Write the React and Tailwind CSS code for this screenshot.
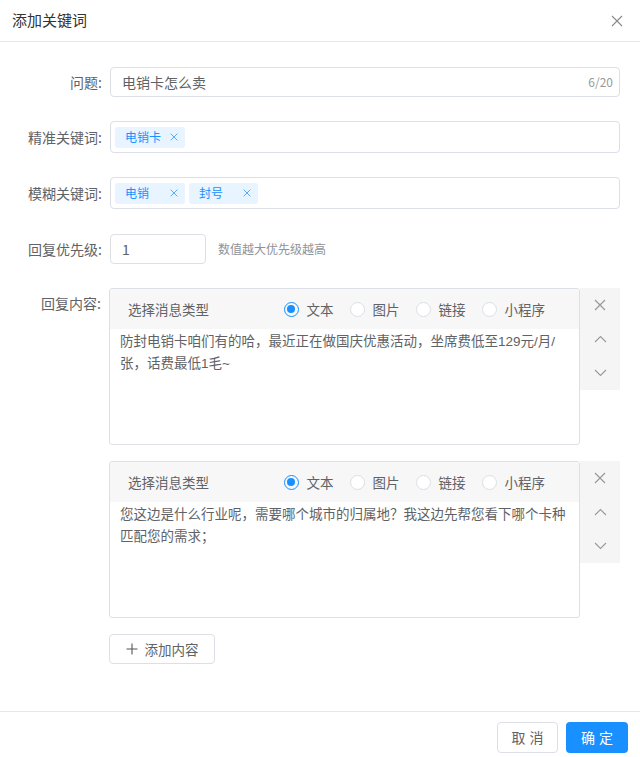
import React from "react";

const font = { fontFamily: '"Noto Sans CJK SC", "Noto Sans", sans-serif' };
const bodyFont = { fontFamily: '"Liberation Sans", "Noto Sans CJK SC", sans-serif' };

function XIcon({ size = 12, color = "#999", sw = 1.2 }) {
  return (
    <svg width={size} height={size} viewBox="0 0 12 12">
      <path d="M1 1L11 11M11 1L1 11" stroke={color} strokeWidth={sw} fill="none" />
    </svg>
  );
}

function Chevron({ up }) {
  return (
    <svg width="13" height="8" viewBox="0 0 13 8">
      <path d={up ? "M1 7L6.5 1.5L12 7" : "M1 1L6.5 6.5L12 1"} stroke="#999" strokeWidth="1.1" fill="none" />
    </svg>
  );
}

function Tag({ text, w }) {
  return (
    <div className={`h-[21px] ${w} rounded-[3px] bg-[#e8f4ff] flex items-center justify-between pl-[10px] pr-[7px] text-[12px] text-[#1890ff]`}>
      <span>{text}</span>
      <XIcon size={8} color="#1890ff" sw={1.1} />
    </div>
  );
}

function Radio({ checked, label }) {
  return (
    <div className="flex items-center gap-[8px]">
      {checked ? (
        <div className="w-[15px] h-[15px] rounded-full border border-[#1890ff] flex items-center justify-center">
          <div className="w-[8px] h-[8px] rounded-full bg-[#1890ff]" />
        </div>
      ) : (
        <div className="w-[15px] h-[15px] rounded-full border border-[#dcdfe6] bg-white" />
      )}
      <span className="text-[13.5px] text-[#606266]">{label}</span>
    </div>
  );
}

function Card({ text }) {
  return (
    <div className="flex items-start">
      <div className="w-[471px] h-[157px] border border-[#dcdfe6] rounded-[3px] flex flex-col overflow-hidden">
        <div className="h-[40px] bg-[#f7f7f7] flex items-center pl-[18px] pr-[34px] shrink-0">
          <span className="text-[13.5px] text-[#606266]">选择消息类型</span>
          <div className="ml-auto flex items-center gap-[16px]">
            <Radio checked label="文本" />
            <Radio label="图片" />
            <Radio label="链接" />
            <Radio label="小程序" />
          </div>
        </div>
        <div className="pl-[10px] pr-[4px] pt-[2px] text-[13.5px] leading-[22px] text-[#606266]" style={bodyFont}>{text}</div>
      </div>
      <div className="w-[40px] h-[102px] bg-[#f5f5f5] flex flex-col items-center pt-[10px] gap-[20px]">
        <div className="h-[14px] flex items-center"><XIcon size={12} /></div>
        <div className="h-[14px] flex items-center"><Chevron up /></div>
        <div className="h-[14px] flex items-center"><Chevron /></div>
      </div>
    </div>
  );
}

export default function App() {
  return (
    <div className="w-[640px] h-[757px] bg-white flex flex-col" style={font}>
      <div className="h-[42px] border-b border-[#e8e8e8] flex items-center px-[12px] shrink-0">
        <span className="text-[15px] text-[#333]">添加关键词</span>
        <div className="ml-auto mr-[5px]"><XIcon size={12} color="#888" sw={1.1} /></div>
      </div>

      <div className="flex-1 pt-[25px] pr-[20px] flex flex-col">
        <div className="flex items-center">
          <div className="w-[110px] pr-[8px] text-right text-[14px] text-[#606266]">问题:</div>
          <div className="flex-1 h-[30px] border border-[#dcdfe6] rounded-[4px] flex items-center pl-[11px] pr-[6px]">
            <span className="text-[14px] text-[#606266]">电销卡怎么卖</span>
            <span className="ml-auto text-[12px] text-[#999]">6/20</span>
          </div>
        </div>

        <div className="flex items-center mt-[24px]">
          <div className="w-[110px] pr-[8px] text-right text-[14px] text-[#606266]">精准关键词:</div>
          <div className="flex-1 h-[32px] border border-[#dcdfe6] rounded-[4px] flex items-center pl-[4px] gap-[4px]">
            <Tag text="电销卡" w="w-[70px]" />
          </div>
        </div>

        <div className="flex items-center mt-[24px]">
          <div className="w-[110px] pr-[8px] text-right text-[14px] text-[#606266]">模糊关键词:</div>
          <div className="flex-1 h-[32px] border border-[#dcdfe6] rounded-[4px] flex items-center pl-[4px] gap-[4px]">
            <Tag text="电销" w="w-[70px]" />
            <Tag text="封号" w="w-[69px]" />
          </div>
        </div>

        <div className="flex items-center mt-[25px]">
          <div className="w-[110px] pr-[8px] text-right text-[14px] text-[#606266]">回复优先级:</div>
          <div className="w-[96px] h-[30px] border border-[#dcdfe6] rounded-[4px] flex items-center pl-[11px]">
            <span className="text-[14px] text-[#606266]">1</span>
          </div>
          <span className="ml-[12px] text-[12px] text-[#909399]">数值越大优先级越高</span>
        </div>

        <div className="flex items-start mt-[24px]">
          <div className="w-[110px] pr-[8px] pt-[5px] text-right text-[14px] text-[#606266]">回复内容:</div>
          <div className="flex flex-col gap-[16px]">
            <Card text="防封电销卡咱们有的哈，最近正在做国庆优惠活动，坐席费低至129元/月/张，话费最低1毛~" />
            <Card text="您这边是什么行业呢，需要哪个城市的归属地？我这边先帮您看下哪个卡种匹配您的需求；" />
            <div className="w-[106px] h-[30px] border border-[#dcdfe6] rounded-[4px] flex items-center justify-center gap-[7px]">
              <svg width="12" height="12" viewBox="0 0 12 12">
                <path d="M6 0.5V11.5M0.5 6H11.5" stroke="#555" strokeWidth="1.1" fill="none" />
              </svg>
              <span className="text-[13.5px] text-[#606266]">添加内容</span>
            </div>
          </div>
        </div>
      </div>

      <div className="h-[46px] border-t border-[#e8e8e8] flex items-start justify-end pt-[10px] pr-[12px] gap-[8px] shrink-0">
        <div className="w-[61px] h-[31px] border border-[#dcdfe6] rounded-[4px] flex items-center justify-center text-[14px] text-[#606266] tracking-[4px] pl-[4px]">取消</div>
        <div className="w-[62px] h-[31px] bg-[#1890ff] rounded-[4px] flex items-center justify-center text-[14px] text-white tracking-[4px] pl-[4px]">确定</div>
      </div>
    </div>
  );
}
